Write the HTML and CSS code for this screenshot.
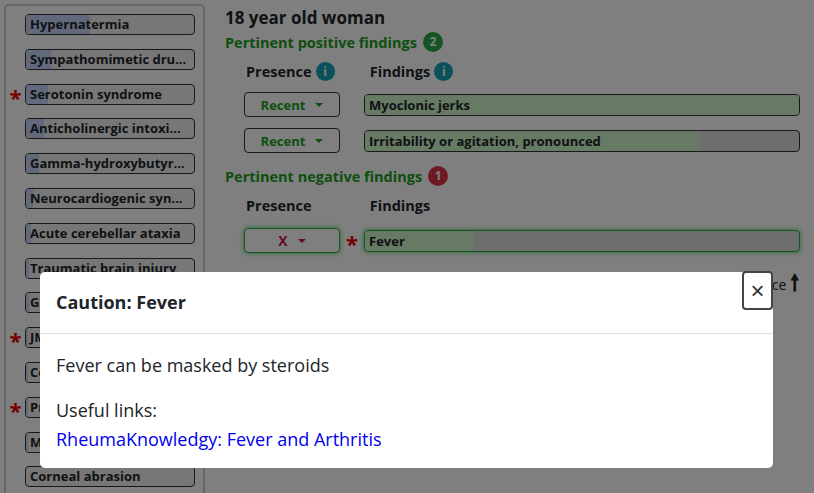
FILE: index.html
```html
<!DOCTYPE html>
<html lang="en">
<head>
    <meta charset="UTF-8">
    <title>Differential diagnosis</title>
    <link rel="stylesheet" href="styles.css">
</head>
<body>
    <div class="sidebar">
        <div class="dx"><span class="star"></span><div class="dx-btn"><div class="dx-fill" style="width: 38%"></div><span>Hypernatermia</span></div></div>
        <div class="dx"><span class="star"></span><div class="dx-btn"><div class="dx-fill" style="width: 15%"></div><span>Sympathomimetic dru...</span></div></div>
        <div class="dx"><span class="star">*</span><div class="dx-btn"><div class="dx-fill" style="width: 13%"></div><span>Serotonin syndrome</span></div></div>
        <div class="dx"><span class="star"></span><div class="dx-btn"><div class="dx-fill" style="width: 11%"></div><span>Anticholinergic intoxi...</span></div></div>
        <div class="dx"><span class="star"></span><div class="dx-btn"><div class="dx-fill" style="width: 8%"></div><span>Gamma-hydroxybutyr...</span></div></div>
        <div class="dx"><span class="star"></span><div class="dx-btn"><div class="dx-fill" style="width: 4%"></div><span>Neurocardiogenic syn...</span></div></div>
        <div class="dx"><span class="star"></span><div class="dx-btn"><div class="dx-fill" style="width: 3%"></div><span>Acute cerebellar ataxia</span></div></div>
        <div class="dx"><span class="star"></span><div class="dx-btn"><div class="dx-fill" style="width: 2%"></div><span>Traumatic brain injury</span></div></div>
        <div class="dx"><span class="star"></span><div class="dx-btn"><div class="dx-fill" style="width: 2%"></div><span>Guillain-Barré syndrome</span></div></div>
        <div class="dx"><span class="star">*</span><div class="dx-btn"><div class="dx-fill" style="width: 1%"></div><span>JME</span></div></div>
        <div class="dx"><span class="star"></span><div class="dx-btn"><div class="dx-fill" style="width: 1%"></div><span>Conversion disorder</span></div></div>
        <div class="dx"><span class="star">*</span><div class="dx-btn"><div class="dx-fill" style="width: 1%"></div><span>Propofol infusion</span></div></div>
        <div class="dx"><span class="star"></span><div class="dx-btn"><div class="dx-fill" style="width: 1%"></div><span>Multiple sclerosis</span></div></div>
        <div class="dx"><span class="star"></span><div class="dx-btn"><span>Corneal abrasion</span></div></div>
    </div>

    <div class="main">
        <h1>18 year old woman</h1>

        <h2>Pertinent positive findings <span class="badge badge-green">2</span></h2>
        <div class="row head">
            <div class="col-presence">Presence <span class="info">i</span></div>
            <div class="col-star"></div>
            <div class="col-finding">Findings <span class="info">i</span></div>
        </div>
        <div class="row">
            <div class="col-presence"><div class="drop">Recent <span class="caret"></span></div></div>
            <div class="col-star"></div>
            <div class="col-finding"><div class="bar"><div class="bar-fill" style="width: 100%"></div><span>Myoclonic jerks</span></div></div>
        </div>
        <div class="row">
            <div class="col-presence"><div class="drop">Recent <span class="caret"></span></div></div>
            <div class="col-star"></div>
            <div class="col-finding"><div class="bar"><div class="bar-fill" style="width: 77%"></div><span>Irritability or agitation, pronounced</span></div></div>
        </div>

        <h2 class="neg">Pertinent negative findings <span class="badge badge-red">1</span></h2>
        <div class="row head">
            <div class="col-presence">Presence</div>
            <div class="col-star"></div>
            <div class="col-finding">Findings</div>
        </div>
        <div class="row">
            <div class="col-presence"><div class="drop drop-x glow">X <span class="caret"></span></div></div>
            <div class="col-star star">*</div>
            <div class="col-finding"><div class="bar glow"><div class="bar-fill" style="width: 25%"></div><span>Fever</span></div></div>
        </div>

        <div class="sort">Sort by relevance <span class="arrow">&#129045;</span></div>
    </div>

    <div class="backdrop"></div>

    <div class="modal">
        <div class="modal-header">Caution: Fever</div>
        <button class="close">&times;</button>
        <div class="modal-body">
            <p>Fever can be masked by steroids</p>
            <p class="links">Useful links:</p>
            <a href="#">RheumaKnowledgy: Fever and Arthritis</a>
        </div>
    </div>
</body>
</html>
```

FILE: styles.css
```css
body {
    font-family: "Open Sans", "Noto Sans", sans-serif;
    margin: 0;
    padding: 4px 0 0 4px;
    display: flex;
    align-items: flex-start;
    background-color: white;
    color: #212529;
    height: 493px;
    box-sizing: border-box;
    overflow: hidden;
}
.sidebar {
    width: 201px;
    height: 495px;
    border: 2px solid #ccc;
    border-radius: 5px;
    padding-top: 8px;
    box-sizing: border-box;
    flex-shrink: 0;
    overflow: hidden;
}
.dx {
    display: flex;
    align-items: center;
    height: 21px;
    margin-bottom: 13.8px;
}
.star {
    width: 19px;
    color: #e00;
    font-size: 22px;
    font-weight: bold;
    text-align: center;
    line-height: 21px;
    padding-top: 6px;
    box-sizing: border-box;
}
.dx-btn {
    position: relative;
    width: 170px;
    height: 21px;
    box-sizing: border-box;
    border: 1px solid #333;
    border-radius: 4px;
    background-color: #eee;
    overflow: hidden;
    font-size: 13px;
    font-weight: bold;
    line-height: 19px;
    white-space: nowrap;
}
.dx-fill {
    position: absolute;
    top: 0;
    left: 0;
    bottom: 0;
    background-color: #c4d2fa;
}
.dx-btn span {
    position: relative;
    padding-left: 4px;
}
.main {
    padding-left: 20px;
    width: 580px;
}
h1 {
    font-size: 17px;
    margin: 2px 0 3px;
}
h2 {
    font-size: 14.5px;
    color: #1a9e1a;
    margin: 0;
    display: flex;
    align-items: center;
}
h2.neg {
    margin-top: 13px;
}
.badge {
    display: inline-block;
    color: white;
    font-size: 12px;
    font-weight: bold;
    border-radius: 10px;
    min-width: 20px;
    height: 20px;
    box-sizing: border-box;
    text-align: center;
    padding: 0 5px;
    margin-left: 6px;
    line-height: 20px;
}
.badge-green {
    background-color: #28a745;
}
.badge-red {
    background-color: #dc3545;
}
.row {
    display: flex;
    align-items: center;
    margin-bottom: 11px;
}
.row.head {
    font-size: 14.5px;
    font-weight: bold;
    margin: 9px 0 11px;
    height: 20px;
}
.neg + .row.head {
    margin: 9px 0 12px;
}
.col-presence {
    width: 96px;
    margin-left: 19px;
    display: flex;
    align-items: center;
}
.head .col-presence {
    padding-left: 2px;
}
.head .col-finding {
    padding-left: 4px;
}
.col-star {
    width: 24px;
    text-align: center;
}
.col-finding {
    width: 436px;
    display: flex;
    align-items: center;
}
.info {
    display: inline-block;
    width: 19px;
    height: 19px;
    border-radius: 50%;
    background-color: #17a2b8;
    color: white;
    font-size: 12px;
    text-align: center;
    line-height: 19px;
    margin-left: 4px;
}
.drop {
    width: 96px;
    height: 25px;
    box-sizing: border-box;
    border: 1px solid #333;
    border-radius: 4px;
    color: #1a9e1a;
    font-size: 13px;
    font-weight: bold;
    display: flex;
    align-items: center;
    justify-content: center;
}
.drop-x {
    color: #c8145a;
    font-size: 14px;
}
.caret {
    display: inline-block;
    margin-left: 10px;
    border-left: 4px solid transparent;
    border-right: 4px solid transparent;
    border-top: 4px solid currentColor;
}
.bar {
    position: relative;
    width: 436px;
    height: 22px;
    box-sizing: border-box;
    border: 1px solid #333;
    border-radius: 4px;
    background-color: #ddd;
    overflow: hidden;
    font-size: 13px;
    font-weight: bold;
    line-height: 20px;
}
.bar-fill {
    position: absolute;
    top: 0;
    left: 0;
    bottom: 0;
    background-color: #cdf5c8;
}
.bar span {
    position: relative;
    padding-left: 4px;
}
.glow {
    border-color: #28a745;
    box-shadow: 0 0 4px 1px rgba(40, 200, 70, 0.6);
}
.col-star.star {
    width: 24px;
    padding: 6px 0 0;
}
.sort {
    text-align: right;
    width: 574px;
    font-size: 14px;
    margin-top: 12px;
}
.arrow {
    font-weight: bold;
    font-size: 22px;
}
.backdrop {
    position: fixed;
    top: 0;
    left: 0;
    width: 100%;
    height: 100%;
    background-color: rgba(0, 0, 0, 0.5);
}
.modal {
    position: fixed;
    left: 40px;
    top: 272px;
    width: 733px;
    height: 196px;
    background-color: white;
    border-radius: 5px;
}
.modal-header {
    font-size: 18px;
    font-weight: bold;
    padding: 0 16px;
    height: 61px;
    line-height: 61px;
    border-bottom: 1px solid #dee2e6;
}
.close {
    position: absolute;
    top: -1px;
    right: 0;
    width: 31px;
    height: 39px;
    border: 2px solid #444;
    border-radius: 4px;
    background-color: white;
    color: #333;
    font-size: 24px;
    padding: 0;
    line-height: 30px;
}
.modal-body {
    padding: 19px 16px 0;
    font-size: 18px;
}
.modal-body p {
    margin: 0 0 21px;
}
.modal-body p.links {
    margin-bottom: 5px;
}
.modal-body a {
    color: #0000ee;
    text-decoration: none;
}
```
